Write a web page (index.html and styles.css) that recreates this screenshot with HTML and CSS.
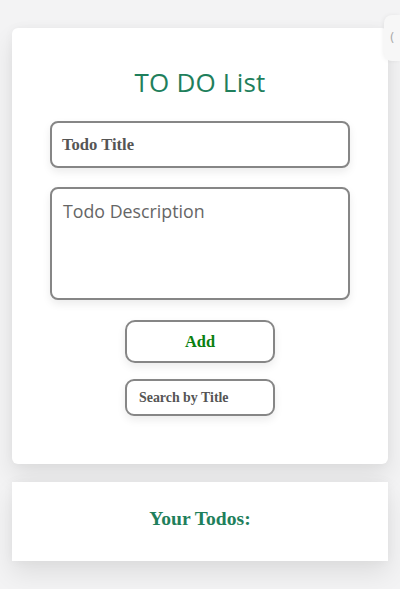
FILE: index.html
```html
<!DOCTYPE html>
<html>
<head>
<meta charset="utf-8">
<link rel="stylesheet" href="styles.css">
</head>
<body>
<div class="page">
  <div class="card main">
    <h1 class="title">TO DO List</h1>
    <div class="field title-field">Todo Title</div>
    <div class="field desc-field">Todo Description</div>
    <div class="btn add">Add</div>
    <div class="field search">Search by Title</div>
  </div>
  <div class="card todos">
    <h2 class="todos-title">Your Todos:</h2>
  </div>
</div>
<div class="side-tab"><span>(</span></div>
</body>
</html>
```
FILE: styles.css
```css
html, body {
  margin: 0;
  padding: 0;
}
body {
  background: #f3f3f4;
  width: 400px;
  height: 589px;
  overflow: hidden;
  position: relative;
}
.page {
  padding: 28px 12px 0 12px;
  display: flex;
  flex-direction: column;
  gap: 18px;
}
.card {
  background: #ffffff;
  box-shadow: 0 12px 24px rgba(0,0,0,0.09), 0 0 10px rgba(0,0,0,0.04);
}
.main {
  border-radius: 6px;
  height: 436px;
  box-sizing: border-box;
  display: flex;
  flex-direction: column;
  align-items: center;
  padding-top: 36px;
}
.title {
  margin: 0 0 21px 0;
  font-family: "Open Sans", sans-serif;
  font-weight: 400;
  font-size: 26px;
  line-height: 36px;
  color: #1f7f5c;
  letter-spacing: 0.2px;
}
.field {
  box-sizing: border-box;
  border: 2px solid #868686;
  border-radius: 8px;
  background: #fff;
  box-shadow: 0 4px 8px rgba(0,0,0,0.08);
  color: #555;
}
.title-field {
  width: 300px;
  height: 47px;
  padding-left: 10px;
  display: flex;
  align-items: center;
  font-family: "Liberation Serif", serif;
  font-weight: bold;
  font-size: 16.6px;
}
.desc-field {
  margin-top: 19px;
  width: 300px;
  height: 113px;
  padding: 10px 11px;
  font-family: "Open Sans", sans-serif;
  font-size: 17.8px;
  color: #666;
}
.btn {
  box-sizing: border-box;
  border: 2px solid #868686;
  border-radius: 10px;
  background: #fff;
  box-shadow: 0 4px 8px rgba(0,0,0,0.08);
}
.add {
  margin-top: 20px;
  width: 150px;
  height: 43px;
  display: flex;
  align-items: center;
  justify-content: center;
  font-family: "Liberation Serif", serif;
  font-weight: bold;
  font-size: 16.4px;
  color: #0b8010;
}
.search {
  margin-top: 16px;
  width: 150px;
  height: 37px;
  padding-left: 12px;
  display: flex;
  align-items: center;
  border-radius: 9px;
  font-family: "Liberation Serif", serif;
  font-weight: bold;
  font-size: 13.9px;
}
.todos {
  height: 79px;
  box-sizing: border-box;
  padding-bottom: 6px;
  display: flex;
  align-items: center;
  justify-content: center;
}
.todos-title {
  margin: 0;
  font-family: "Liberation Serif", serif;
  font-weight: bold;
  font-size: 19.6px;
  color: #1f7f5c;
}
.side-tab {
  position: absolute;
  top: 15px;
  right: 0;
  width: 16px;
  height: 46px;
  background: #f7f7f7;
  border-radius: 8px 0 0 8px;
  box-shadow: -1px 0 4px rgba(0,0,0,0.06);
  display: flex;
  align-items: center;
  justify-content: center;
  font-family: "DejaVu Sans", sans-serif;
  font-size: 12px;
  color: #aaa;
}
```
